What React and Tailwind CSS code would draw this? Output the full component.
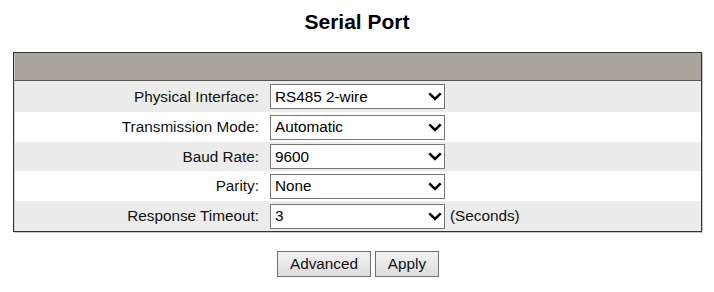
import React from "react";

const Chevron = () => (
  <svg width="14" height="9" viewBox="0 0 14 9" className="block">
    <path d="M1.3 1.4 L7 7 L12.7 1.4" fill="none" stroke="#000" strokeWidth="2.5" />
  </svg>
);

const Select = ({ value }) => (
  <div className="w-[175px] h-[25px] border border-[#767676] bg-white flex items-center justify-between pl-[4px] pr-[2px]">
    <span className="text-[15.3px] leading-none text-black">{value}</span>
    <Chevron />
  </div>
);

const rows = [
  { label: "Physical Interface:", value: "RS485 2-wire", gray: true, h: "h-[31px]" },
  { label: "Transmission Mode:", value: "Automatic", gray: false, h: "h-[30px]" },
  { label: "Baud Rate:", value: "9600", gray: true, h: "h-[29px]" },
  { label: "Parity:", value: "None", gray: false, h: "h-[30px]" },
  { label: "Response Timeout:", value: "3", gray: true, h: "h-[30px]", suffix: "(Seconds)" },
];

export default function App() {
  return (
    <div
      className="w-[714px] h-[292px] bg-white text-black"
      style={{ fontFamily: '"Liberation Sans", Arial, sans-serif' }}
    >
      <div className="h-[52px] pt-[9px] text-center">
        <h1 className="text-[21px] font-bold leading-[26px]">Serial Port</h1>
      </div>
      <div className="mx-[13px] w-[689px] border border-[#333] shadow-[1px_1px_0_#c8c8c8]">
        <div className="h-[28px] bg-[#aca59e] border-b border-[#555] border-l border-l-[#c9c9c9]" />
        {rows.map((r) => (
          <div
            key={r.label}
            className={`${r.h} flex items-center border-l border-l-[#d4d4d4] ${r.gray ? "bg-[#ececec]" : "bg-white"}`}
          >
            <div className="w-[244px] text-right text-[15.3px] leading-none text-[#111]">{r.label}</div>
            <div className="ml-[11px]">
              <Select value={r.value} />
            </div>
            {r.suffix && (
              <span className="ml-[5px] text-[15.3px] leading-none text-[#111]">{r.suffix}</span>
            )}
          </div>
        ))}
      </div>
      <div className="mt-[19px] flex justify-center gap-[4px] pl-[2px]">
        <button className="w-[94px] h-[26px] border border-[#707070] bg-gradient-to-b from-[#f2f2f2] to-[#dddddd] text-[15.3px] leading-none text-[#111]">
          Advanced
        </button>
        <button className="w-[64px] h-[26px] border border-[#707070] bg-gradient-to-b from-[#f2f2f2] to-[#dddddd] text-[15.3px] leading-none text-[#111]">
          Apply
        </button>
      </div>
    </div>
  );
}
